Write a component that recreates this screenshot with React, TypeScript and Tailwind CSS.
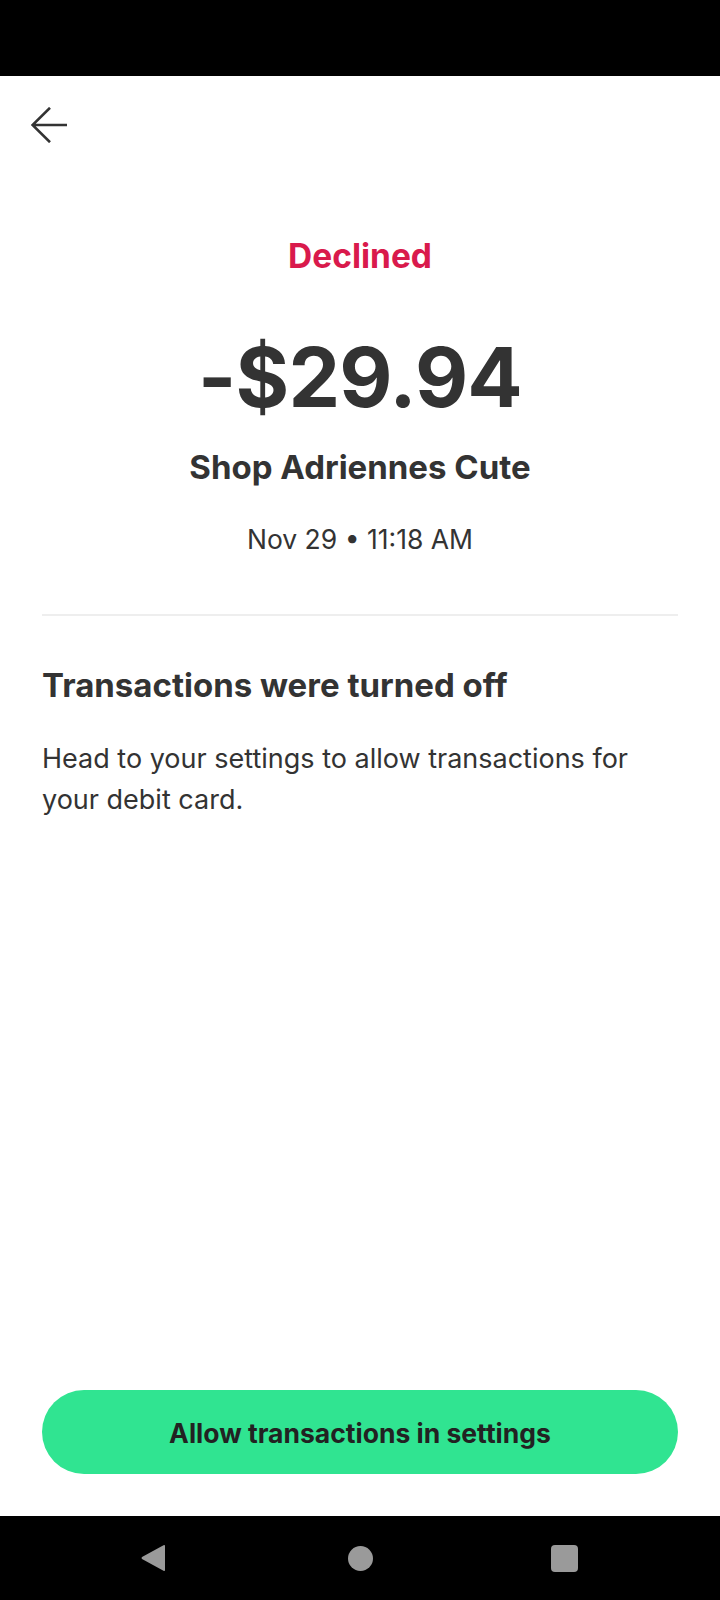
import React from "react";

export default function App() {
  return (
    <div className="w-[720px] h-[1600px] flex flex-col bg-white text-[#333333] font-['Inter',sans-serif]">
      <div className="h-[76px] shrink-0 bg-black" />
      <div className="flex-1 flex flex-col px-[42px]">
        <div className="mt-[31px] ml-[-11px] w-[36px] h-[36px]">
          <svg width="36" height="36" viewBox="0 0 36 36" fill="none">
            <path d="M36 18H1.5M19 0.8L1.5 18L19 35.2" stroke="#333333" strokeWidth="2.6" strokeLinejoin="miter" />
          </svg>
        </div>
        <div className="mt-[93px] text-center text-[33.5px] leading-[40px] font-bold text-[#D91A4C]">Declined</div>
        <div className="mt-[61px] text-center text-[82px] leading-[82px] font-bold tracking-[-0.8px]">-$29.94</div>
        <div className="mt-[28px] text-center text-[33px] leading-[40px] font-bold">Shop Adriennes Cute</div>
        <div className="mt-[34px] text-center text-[26.5px] leading-[36px] font-normal">Nov 29 • 11:18 AM</div>
        <div className="mt-[57px] h-[2px] bg-[#eeeeee]" />
        <div className="mt-[49px] text-[33px] leading-[40px] font-bold">Transactions were turned off</div>
        <div className="mt-[33px] text-[27px] leading-[41px] font-normal">
          Head to your settings to allow transactions for your debit card.
        </div>
        <button className="mt-auto mb-[42px] h-[84px] w-full rounded-full bg-[#30E491] pt-[3px] text-[26.5px] font-bold text-[#222222]">
          Allow transactions in settings
        </button>
      </div>
      <div className="h-[84px] shrink-0 bg-black flex items-center">
        <svg className="ml-[141px]" width="24" height="28" viewBox="0 0 24 28">
          <path d="M22.5 1.2Q24 0.3 24 2V26Q24 27.7 22.5 26.8L1 15Q0 14 1 13Z" fill="#9a9a9a" />
        </svg>
        <div className="ml-[183px] w-[25px] h-[25px] rounded-full bg-[#9a9a9a]" />
        <div className="ml-[178px] w-[27px] h-[27px] rounded-[4px] bg-[#9a9a9a]" />
      </div>
    </div>
  );
}
